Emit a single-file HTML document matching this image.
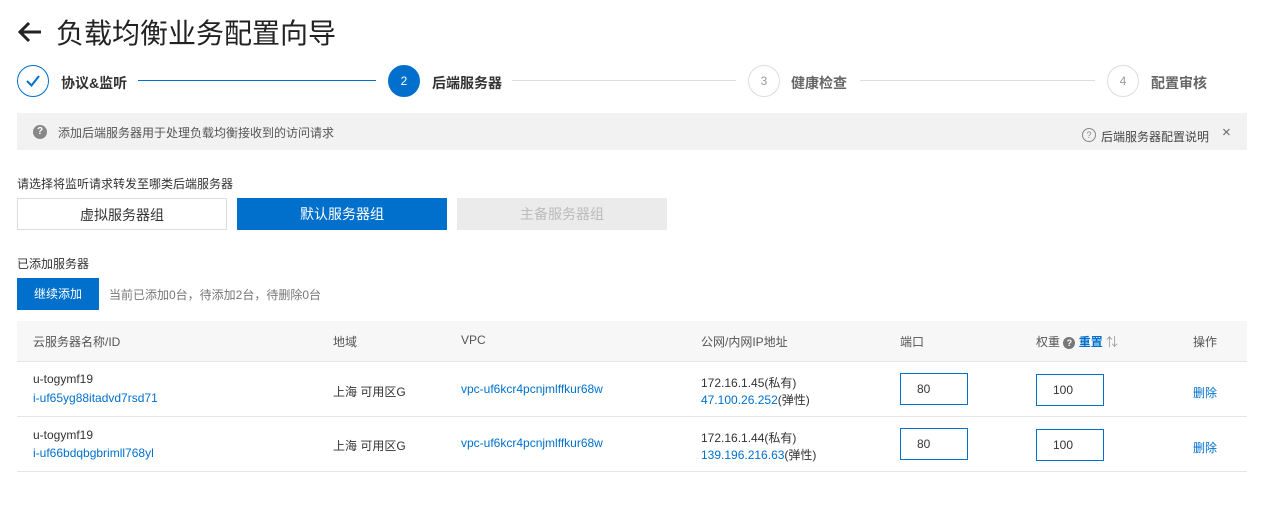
<!DOCTYPE html><html><head><meta charset="utf-8"><style>
body{margin:0;width:1264px;height:530px;background:#fff;font-family:"Liberation Sans","Noto Sans CJK SC",sans-serif;color:#333;position:relative;overflow:hidden}
.a{position:absolute;white-space:nowrap}
.c{position:absolute;width:30px;height:30px;border-radius:50%;border:1px solid #ddd;top:65px;text-align:center;line-height:30px;font-size:12px;color:#999}
.sl{position:absolute;top:82px;font-size:14px;font-weight:bold;color:#333}
.ln{position:absolute;top:80px;height:1px;background:#ddd}
.b{position:absolute;top:198px;width:210px;height:32px;line-height:32px;text-align:center;font-size:14px;box-sizing:border-box}
.f{font-size:12px}
.l{color:#0070cc}
.in{position:absolute;width:68px;height:32px;border:1px solid #0070cc;box-sizing:border-box;font-size:12px;line-height:30px;padding-left:16px}
</style></head><body>
<svg class="a" style="left:17px;top:20px" width="26" height="24" viewBox="0 0 26 24"><path d="M24 12H4M12 3L3 12l9 9" fill="none" stroke="#222" stroke-width="3"/></svg>
<div class="a" style="left:56px;top:12px;font-size:28px;color:#222">负载均衡业务配置向导</div>
<div class="c" style="left:17px;border-color:#0070cc;color:#0070cc"><svg width="30" height="30" viewBox="0 0 30 30"><path d="M9 15l4.5 4.5L21 10" fill="none" stroke="#0070cc" stroke-width="2"/></svg></div>
<div class="sl" style="left:61px;top:73px">协议&amp;监听</div>
<div class="ln" style="left:138px;width:238px;background:#0070cc"></div>
<div class="c" style="left:388px;background:#0070cc;border-color:#0070cc;color:#fff">2</div>
<div class="sl" style="left:432px;top:73px">后端服务器</div>
<div class="ln" style="left:512px;width:224px"></div>
<div class="c" style="left:748px">3</div>
<div class="sl" style="left:791px;top:73px;color:#666">健康检查</div>
<div class="ln" style="left:860px;width:235px"></div>
<div class="c" style="left:1107px">4</div>
<div class="sl" style="left:1151px;top:73px;color:#666">配置审核</div>
<div class="a" style="left:17px;top:113px;width:1230px;height:37px;background:#f2f2f2"></div>
<div class="a" style="left:33px;top:125px;width:14px;height:14px;border-radius:50%;background:#888;color:#fff;font-size:10px;text-align:center;line-height:14px;font-weight:bold">?</div>
<div class="a f" style="left:58px;top:124px;color:#555">添加后端服务器用于处理负载均衡接收到的访问请求</div>
<div class="a" style="left:1082px;top:128px;width:12px;height:12px;border-radius:50%;border:1px solid #888;color:#888;font-size:9px;text-align:center;line-height:12px">?</div>
<div class="a f" style="left:1101px;top:128px;color:#444">后端服务器配置说明</div>
<div class="a" style="left:1222px;top:124px;color:#666;font-size:15px">×</div>
<div class="a f" style="left:17px;top:175px">请选择将监听请求转发至哪类后端服务器</div>
<div class="b" style="left:17px;border:1px solid #ddd">虚拟服务器组</div>
<div class="b" style="left:237px;background:#0070cc;color:#fff">默认服务器组</div>
<div class="b" style="left:457px;background:#ebebeb;color:#bbb">主备服务器组</div>
<div class="a f" style="left:17px;top:255px">已添加服务器</div>
<div class="a f" style="left:17px;top:278px;width:82px;height:32px;background:#0070cc;color:#fff;text-align:center;line-height:32px">继续添加</div>
<div class="a f" style="left:109px;top:286px;color:#777">当前已添加0台，待添加2台，待删除0台</div>
<div class="a" style="left:17px;top:321px;width:1230px;height:40px;background:#f7f7f7;border-bottom:1px solid #e5e5e5"></div>
<div class="a f" style="left:33px;top:333px;color:#555">云服务器名称/ID</div>
<div class="a f" style="left:333px;top:333px;color:#555">地域</div>
<div class="a f" style="left:461px;top:333px;color:#555">VPC</div>
<div class="a f" style="left:701px;top:333px;color:#555">公网/内网IP地址</div>
<div class="a f" style="left:900px;top:333px;color:#555">端口</div>
<div class="a f" style="left:1036px;top:333px;color:#555">权重 <span style="display:inline-block;width:12px;height:12px;border-radius:50%;background:#777;color:#fff;font-size:9px;text-align:center;line-height:12px;font-weight:bold">?</span> <span class="l" style="font-weight:bold">重置</span> <span style="color:#999">⇅</span></div>
<div class="a f" style="left:1193px;top:333px;color:#555">操作</div>
<div class="a" style="left:17px;top:416px;width:1230px;height:1px;background:#e5e5e5"></div>
<div class="a" style="left:17px;top:471px;width:1230px;height:1px;background:#e5e5e5"></div>
<div class="a f" style="left:33px;top:372px">u-togymf19</div>
<div class="a f l" style="left:33px;top:391px">i-uf65yg88itadvd7rsd71</div>
<div class="a f" style="left:333px;top:383px">上海 可用区G</div>
<div class="a f l" style="left:461px;top:382px">vpc-uf6kcr4pcnjmlffkur68w</div>
<div class="a f" style="left:701px;top:374px">172.16.1.45(私有)</div>
<div class="a f" style="left:701px;top:391px"><span class="l">47.100.26.252</span>(弹性)</div>
<div class="in" style="left:900px;top:373px">80</div>
<div class="in" style="left:1036px;top:374px">100</div>
<div class="a f l" style="left:1193px;top:384px">删除</div>
<div class="a f" style="left:33px;top:428px">u-togymf19</div>
<div class="a f l" style="left:33px;top:446px">i-uf66bdqbgbrimll768yl</div>
<div class="a f" style="left:333px;top:437px">上海 可用区G</div>
<div class="a f l" style="left:461px;top:436px">vpc-uf6kcr4pcnjmlffkur68w</div>
<div class="a f" style="left:701px;top:429px">172.16.1.44(私有)</div>
<div class="a f" style="left:701px;top:446px"><span class="l">139.196.216.63</span>(弹性)</div>
<div class="in" style="left:900px;top:428px">80</div>
<div class="in" style="left:1036px;top:429px">100</div>
<div class="a f l" style="left:1193px;top:439px">删除</div>
</body></html>
